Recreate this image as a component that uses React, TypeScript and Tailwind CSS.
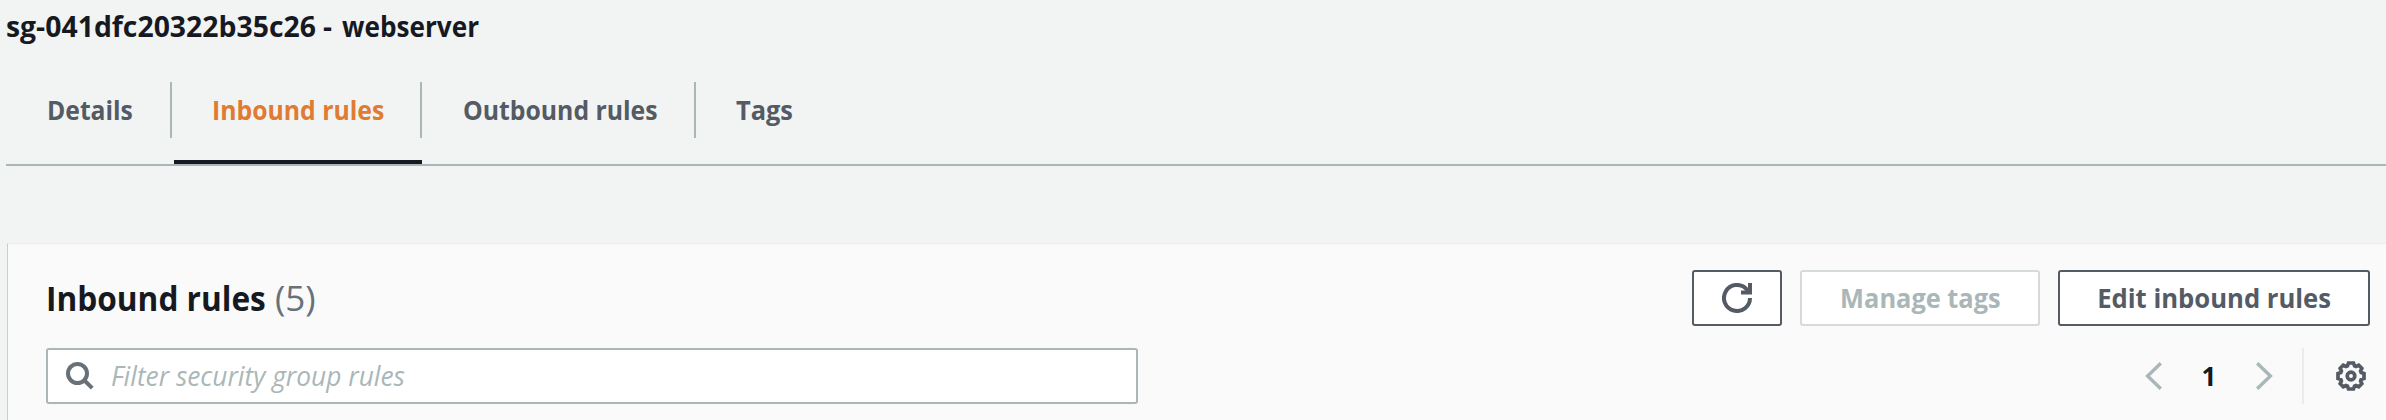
import type { ReactNode } from "react";

type TabProps = {
  label: string;
  width: string;
  stretch: string;
  active?: boolean;
  last?: boolean;
};

function Tab({ label, width, stretch, active, last }: TabProps) {
  return (
    <li className={`flex h-[82px] flex-col justify-between ${width}`}>
      <a
        className={`flex h-14 items-center border-[#aab7b8] text-[27px] font-bold ${
          last ? "" : "border-r-2"
        } ${active ? "text-[#e07b33]" : "text-[#545b64]"}`}
      >
        <span className={`origin-left whitespace-nowrap ${stretch}`}>{label}</span>
      </a>
      {active && <div className="ml-0.5 h-1 bg-[#16191f]" />}
    </li>
  );
}

function Button({ className, children }: { className: string; children: ReactNode }) {
  return (
    <button
      className={`flex h-14 items-center justify-center rounded-[3px] border-2 bg-white text-[27px] font-bold whitespace-nowrap ${className}`}
    >
      {children}
    </button>
  );
}

function RefreshIcon() {
  return (
    <svg viewBox="0 0 30 30" className="size-[30px]" fill="none" stroke="currentColor" strokeWidth="4">
      <path d="M28 15a13 13 0 1 1-3.8-9.2L28 9.5" />
      <path d="M28 0v9.4H19" />
    </svg>
  );
}

function SearchIcon() {
  return (
    <svg viewBox="0 0 28 28" className="size-7" fill="none" stroke="currentColor" strokeWidth="4">
      <circle cx="11.5" cy="11.5" r="9.5" />
      <path d="M18 18l8.2 8.2" />
    </svg>
  );
}

function Chevron({ flip }: { flip?: boolean }) {
  return (
    <svg
      viewBox="0 0 17 28"
      className={`h-7 w-[17px] text-[#aab7b8] ${flip ? "-scale-x-100" : ""}`}
      fill="none"
      stroke="currentColor"
      strokeWidth="3.4"
    >
      <path d="M15.8 1.2L2.6 14l13.2 12.8" />
    </svg>
  );
}

function GearIcon() {
  return (
    <svg viewBox="0 0 30 30" className="size-[30px]" fill="none" stroke="currentColor" strokeWidth="3.7">
      <path d="M12.5 2h5l1 2.800 1.500.6 2.700-1.200 3.100 3.100-1.200 2.700.6 1.500 2.800 1v5l-2.800 1-.6 1.500 1.200 2.700-3.100 3.100-2.700-1.200-1.500.6-1 2.800h-5l-1-2.800-1.500-.6-2.700 1.200-3.100-3.100 1.200-2.700-.6-1.500-2.800-1v-5l2.800-1 .6-1.500-1.200-2.700 3.100-3.100 2.700 1.200 1.500-.6z" />
      <circle cx="15" cy="15" r="3.8" />
    </svg>
  );
}

export default function App() {
  return (
    <div className="flex h-[420px] w-full flex-col overflow-hidden bg-[#f2f4f3] pl-1.5 font-['Open_Sans',sans-serif] text-[#16191f]">
      <h1 className="flex h-[82px] shrink-0 pt-[6px] text-[28px] leading-10 font-bold whitespace-nowrap">
        <span className="w-[317px] origin-left scale-x-[1.013]">sg-041dfc20322b35c26</span>
        <span className="w-[19px]">-</span>
        <span className="origin-left scale-x-[0.935]">webserver</span>
      </h1>

      <ul className="flex shrink-0 border-b-2 border-[#aab7b8]">
        <Tab label="Details" width="w-[166px]" stretch="ml-[41px] scale-x-[0.915]" />
        <Tab label="Inbound rules" width="w-[250px]" stretch="ml-10 scale-x-[0.918]" active />
        <Tab label="Outbound rules" width="w-[274px]" stretch="ml-[41px] scale-x-[0.918]" />
        <Tab label="Tags" width="w-[140px]" stretch="ml-10 scale-x-[0.94]" last />
      </ul>

      <section className="mt-[77px] ml-px flex-1 border-t border-l border-t-[#eaeded] border-l-[#c9cfcf] bg-[#fafafa] pr-4 pl-[38px]">
        <header className="flex items-center justify-between pt-[26px]">
          <h2 className="flex items-center pb-px text-[34px] leading-[54px] whitespace-nowrap">
            <span className="w-[229px] origin-left scale-x-[0.93] font-bold">Inbound rules</span>
            <span className="text-[35px] text-[#687078]">(5)</span>
          </h2>
          <div className="flex gap-[18px]">
            <Button className="w-[90px] border-[#545b64] text-[#545b64]">
              <RefreshIcon />
            </Button>
            <Button className="w-[240px] border-[#d5dbdb] text-[#aab7b8]">
              <span className="scale-x-[0.94]">Manage tags</span>
            </Button>
            <Button className="w-[312px] border-[#545b64] text-[#545b64]">
              <span className="scale-x-[0.95]">Edit inbound rules</span>
            </Button>
          </div>
        </header>

        <div className="mt-[22px] flex items-center justify-between">
          <div className="flex h-14 w-[1092px] items-center rounded-[3px] border-2 border-[#aab7b8] bg-white pl-[18px]">
            <span className="text-[#687078]">
              <SearchIcon />
            </span>
            <span className="ml-[17px] origin-left scale-x-[0.975] text-[27px] whitespace-nowrap text-[#aab7b8] italic">
              Filter security group rules
            </span>
          </div>
          <div className="flex h-14 items-center">
            <Chevron />
            <span className="w-[94px] text-center text-[26px] font-bold">1</span>
            <Chevron flip />
            <div className="ml-[29px] flex h-14 items-center border-l-2 border-[#eaeded] pr-1 pl-8 text-[#545b64]">
              <GearIcon />
            </div>
          </div>
        </div>
      </section>
    </div>
  );
}
